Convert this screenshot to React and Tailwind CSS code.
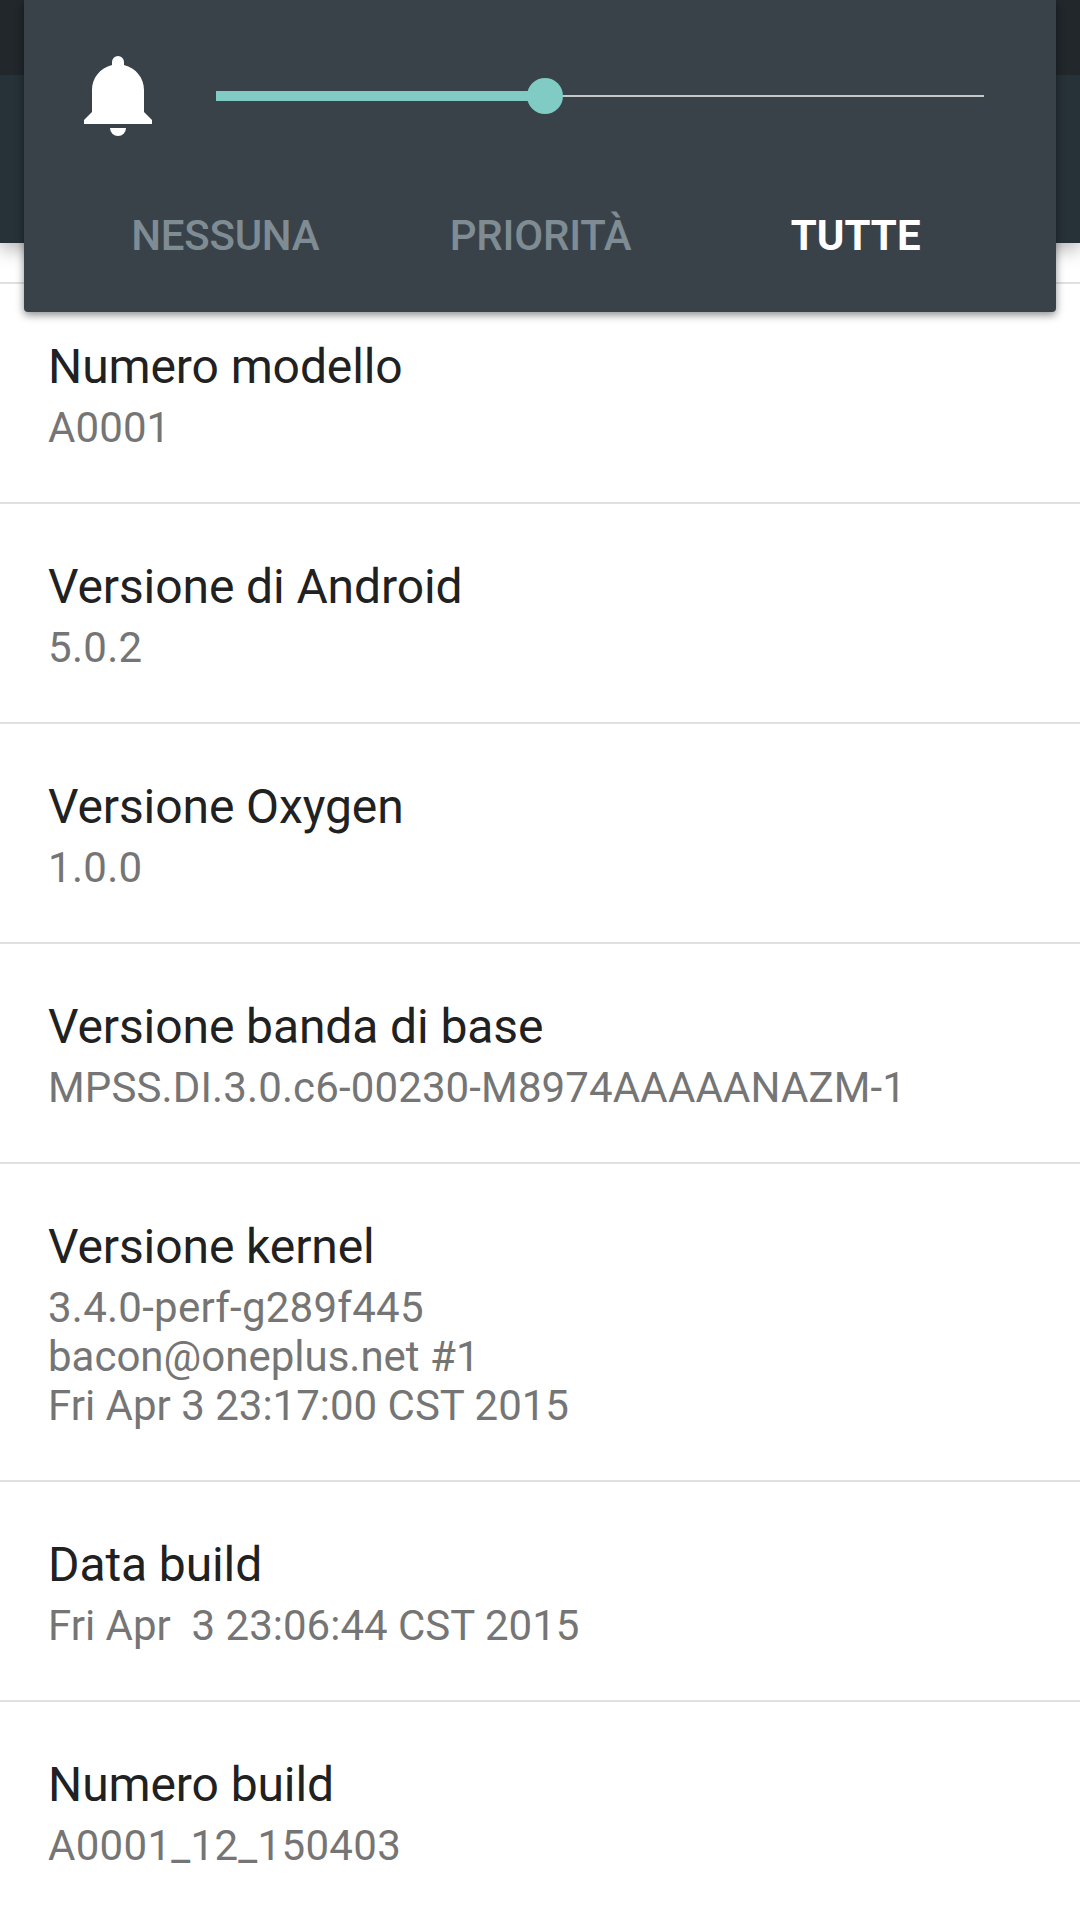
const VOLUME = 0.4284;

const modes = [
  { id: "none", label: "NESSUNA", spacing: "tracking-[-0.25px]" },
  { id: "priority", label: "PRIORITÀ", spacing: "tracking-[-0.2px] pl-px" },
  { id: "all", label: "TUTTE", spacing: "pl-[2px]" },
];

const entries = [
  {
    title: "Numero modello",
    lines: [{ text: "A0001", spacing: "tracking-[0.1px]" }],
  },
  {
    title: "Versione di Android",
    lines: [{ text: "5.0.2", spacing: "tracking-[0.3px]" }],
  },
  {
    title: "Versione Oxygen",
    lines: [{ text: "1.0.0", spacing: "tracking-[0.3px]" }],
  },
  {
    title: "Versione banda di base",
    lines: [
      {
        text: "MPSS.DI.3.0.c6-00230-M8974AAAAANAZM-1",
        spacing: "tracking-[0.13px]",
      },
    ],
  },
  {
    title: "Versione kernel",
    lines: [
      { text: "3.4.0-perf-g289f445", spacing: "tracking-[0.25px]" },
      { text: "bacon@oneplus.net #1" },
      { text: "Fri Apr 3 23:17:00 CST 2015" },
    ],
  },
  {
    title: "Data build",
    lines: [{ text: "Fri Apr  3 23:06:44 CST 2015" }],
  },
  {
    title: "Numero build",
    lines: [{ text: "A0001_12_150403", spacing: "tracking-[0.3px]" }],
  },
];

function BellIcon() {
  return (
    <svg width="68" height="80" viewBox="0 0 68 80" fill="white">
      <path d="M28 9V6a6 6 0 0 1 12 0v3C52 12 60 22 60 34V56L68 64V68H0V64L8 56V34C8 22 16 12 28 9Z" />
      <path d="M26 72H42a8 8 0 0 1-16 0Z" />
    </svg>
  );
}

function VolumeSlider({ value }) {
  return (
    <div className="relative flex h-9 w-[768px] items-center">
      <div
        className="h-[10px] bg-[#80cbc4]"
        style={{ width: `${value * 100}%` }}
      />
      <div className="h-[2px] flex-1 bg-[#c4c8c9]" />
      <div
        className="absolute top-0 size-9 -translate-x-1/2 rounded-full bg-[#80cbc4]"
        style={{ left: `${value * 100}%` }}
      />
    </div>
  );
}

function VolumePanel({ selected }) {
  return (
    <div className="absolute top-0 left-6 h-[312px] w-[1032px] rounded-b-[4px] bg-[#3a4249] shadow-[0_3px_9px_rgba(0,0,0,0.45)]">
      <div className="flex h-[192px] items-center pl-[60px]">
        <BellIcon />
        <div className="ml-16">
          <VolumeSlider value={VOLUME} />
        </div>
      </div>
      <div className="grid grid-cols-3 px-11">
        {modes.map((mode) => (
          <button
            key={mode.id}
            className={`mt-[19px] text-center text-[42px] leading-[49px] ${mode.spacing} ${
              mode.id === selected
                ? "font-bold text-white"
                : "font-medium text-[#7f8c94]"
            }`}
          >
            {mode.label}
          </button>
        ))}
      </div>
    </div>
  );
}

function Entry({ title, lines }) {
  return (
    <li className="border-t-2 border-[#e0e0e0] px-12 pt-[55px] pb-[50px]">
      <h2 className="mb-2 text-[48px] leading-[56px] tracking-[-0.1px] text-[#212121]">
        {title}
      </h2>
      {lines.map((line) => (
        <p
          key={line.text}
          className={`text-[42px] leading-[49px] whitespace-pre text-[#757575] ${line.spacing ?? ""}`}
        >
          {line.text}
        </p>
      ))}
    </li>
  );
}

export default function App() {
  return (
    <div className="relative h-[1920px] w-[1080px] overflow-hidden bg-white font-['Roboto',sans-serif]">
      <div className="relative shadow-[0_6px_18px_rgba(0,0,0,0.3)]">
        <div className="h-[75px] bg-[#21272b]" />
        <div className="h-[168px] bg-[#263238]" />
      </div>

      <ul className="pt-[39px]">
        {entries.map((entry) => (
          <Entry key={entry.title} {...entry} />
        ))}
      </ul>

      <VolumePanel selected="all" />
    </div>
  );
}
